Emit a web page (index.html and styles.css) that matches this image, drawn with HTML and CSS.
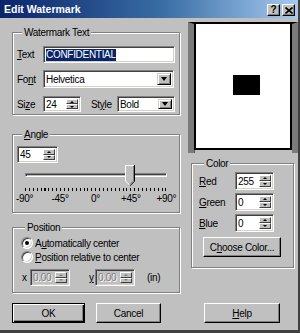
FILE: index.html
```html
<!DOCTYPE html>
<html>
<head>
<meta charset="utf-8">
<title>Edit Watermark</title>
<link rel="stylesheet" href="styles.css">
</head>
<body>
<div class="window">
  <div class="titlebar">
    <span class="title">Edit Watermark</span>
    <div class="caption-btns">
      <span class="cbtn help">?</span>
      <span class="cbtn close"><svg width="8" height="7" viewBox="0 0 8 7"><path d="M0.5 0.5 L7.5 6.5 M7.5 0.5 L0.5 6.5" stroke="#000" stroke-width="1.6" fill="none"/></svg></span>
    </div>
  </div>
  <div class="client">
    <div class="main">
      <div class="left">
        <fieldset class="group g-text">
          <legend>Watermark Text</legend>
          <div class="row r1">
            <span class="lbl"><u>T</u>ext</span>
            <div class="edit w-text"><span class="sel">CONFIDENTIAL</span></div>
          </div>
          <div class="row r2">
            <span class="lbl">Fo<u>n</u>t</span>
            <div class="edit combo w-font"><span class="combo-text">Helvetica</span><span class="dd"><i class="tri-down"></i></span></div>
          </div>
          <div class="row r3">
            <span class="lbl">Si<u>z</u>e</span>
            <div class="edit spin w-size"><span class="spin-text">24</span><span class="spin-btns"><span class="sb"><i class="tri-up-s"></i></span><span class="sb"><i class="tri-down-s"></i></span></span></div>
            <span class="lbl-style">St<u>y</u>le</span>
            <div class="edit combo w-style"><span class="combo-text">Bold</span><span class="dd"><i class="tri-down"></i></span></div>
          </div>
        </fieldset>

        <fieldset class="group g-angle">
          <legend><u>A</u>ngle</legend>
          <div class="edit spin w-angle"><span class="spin-text">45</span><span class="spin-btns"><span class="sb"><i class="tri-up-s"></i></span><span class="sb"><i class="tri-down-s"></i></span></span></div>
          <div class="slider">
            <div class="track"></div>
            <svg class="thumb" width="10" height="22" viewBox="0 0 10 22">
              <polygon points="0,0 10,0 10,16 5,21 0,16" fill="#c0c0c0"/>
              <polyline points="0.5,16 0.5,0.5 9,0.5" stroke="#fff" fill="none"/>
              <polyline points="0.5,16 5,20.5" stroke="#fff" fill="none"/>
              <polyline points="9.5,0 9.5,16.2 5,20.8" stroke="#000" fill="none"/>
              <polyline points="8.5,1 8.5,15.8 5,19.3" stroke="#808080" fill="none"/>
            </svg>
          </div>
          <div class="ticks"></div>
          <div class="scale"><span>-90°</span><span>-45°</span><span>0°</span><span>+45°</span><span>+90°</span></div>
        </fieldset>

        <fieldset class="group g-pos">
          <legend>Position</legend>
          <div class="radio-row"><span class="radio on"></span><span>A<u>u</u>tomatically center</span></div>
          <div class="radio-row"><span class="radio"></span><span><u>P</u>osition relative to center</span></div>
          <div class="xy-row">
            <span class="lbl-x">x</span>
            <div class="edit spin disabled w-xy"><span class="spin-text">0.00</span><span class="spin-btns"><span class="sb"><i class="tri-up-s"></i></span><span class="sb"><i class="tri-down-s"></i></span></span></div>
            <span class="lbl-y"><u>y</u></span>
            <div class="edit spin disabled w-xy"><span class="spin-text">0.00</span><span class="spin-btns"><span class="sb"><i class="tri-up-s"></i></span><span class="sb"><i class="tri-down-s"></i></span></span></div>
            <span class="lbl-in">(in)</span>
          </div>
        </fieldset>
      </div>

      <div class="right">
        <div class="preview"><div class="canvas"><div class="mark"></div></div></div>
        <fieldset class="group g-color">
          <legend>Color</legend>
          <div class="crow">
            <span class="clbl"><u>R</u>ed</span>
            <div class="edit spin w-col"><span class="spin-text">255</span><span class="spin-btns"><span class="sb"><i class="tri-up-s"></i></span><span class="sb"><i class="tri-down-s"></i></span></span></div>
          </div>
          <div class="crow">
            <span class="clbl"><u>G</u>reen</span>
            <div class="edit spin w-col"><span class="spin-text">0</span><span class="spin-btns"><span class="sb"><i class="tri-up-s"></i></span><span class="sb"><i class="tri-down-s"></i></span></span></div>
          </div>
          <div class="crow">
            <span class="clbl"><u>B</u>lue</span>
            <div class="edit spin w-col"><span class="spin-text">0</span><span class="spin-btns"><span class="sb"><i class="tri-up-s"></i></span><span class="sb"><i class="tri-down-s"></i></span></span></div>
          </div>
          <div class="btn choose">C<u>h</u>oose Color...</div>
        </fieldset>
      </div>
    </div>

    <div class="buttons">
      <div class="btn default ok">OK</div>
      <div class="btn cancel">Cancel</div>
      <div class="btn helpbtn"><u>H</u>elp</div>
    </div>
  </div>
</div>
</body>
</html>
```

FILE: styles.css
```css
* { box-sizing: border-box; }

body {
  margin: 0;
  font-family: "Liberation Sans", Arial, sans-serif;
  font-size: 10px;
  letter-spacing: -0.3px;
  color: #000;
  background: #c0c0c0;
}

u { text-decoration: underline; text-underline-offset: 1px; }

.window {
  width: 300px;
  height: 333px;
  background: #c0c0c0;
  border-right: 2px solid #404040;
  border-bottom: 3px solid #404040;
  display: flex;
  flex-direction: column;
  overflow: hidden;
}

/* title bar */
.titlebar {
  flex: none;
  height: 18px;
  background: linear-gradient(to right, #0a246a 0%, #3a6ea5 55%, #a6caf0 100%);
  display: flex;
  align-items: center;
  padding: 0 3px 0 4px;
}
.title {
  flex: 1;
  font-weight: bold;
  font-size: 10.5px;
  letter-spacing: 0;
  color: #fff;
  line-height: 12px;
}
.caption-btns { display: flex; gap: 2px; padding-top: 2px; }
.cbtn {
  width: 13px;
  height: 12px;
  background: #c0c0c0;
  border: 1px solid;
  border-color: #fff #000 #000 #fff;
  box-shadow: inset -1px -1px 0 #808080;
  display: flex;
  align-items: center;
  justify-content: center;
  font-weight: bold;
  font-size: 10px;
  letter-spacing: 0;
  line-height: 10px;
}

/* client */
.client {
  flex: 1;
  display: flex;
  flex-direction: column;
  padding: 4px 0 0 12px;
}
.main { display: flex; gap: 8px; }
.left { width: 168px; display: flex; flex-direction: column; padding-top: 5px; }
.right { width: 110px; display: flex; flex-direction: column; }

/* group boxes */
.group {
  margin: 0;
  padding: 0;
  border: 1px solid #808080;
  box-shadow: 1px 1px 0 #fff, inset 1px 1px 0 #fff;
  min-width: 0;
}
.group legend {
  margin-left: 5px;
  padding: 0 2px;
  height: 11px;
  line-height: 11px;
  background: #c0c0c0;
}

.g-text { height: 88px; padding: 8px 4px 0 4px; }
.g-angle { height: 84px; margin-top: 14px; padding: 6px 4px 0 4px; }
.g-pos { height: 71px; margin-top: 9px; padding: 3px 4px 0 7px; }

/* sunken edit */
.edit {
  height: 17px;
  background: #fff;
  border: 1px solid;
  border-color: #808080 #fff #fff #808080;
  box-shadow: inset 1px 1px 0 #404040, inset -1px -1px 0 #d4d0c8;
  display: flex;
  align-items: center;
  padding: 0 0 0 2px;
}
.sel { background: #0a246a; color: #fff; line-height: 12px; }

.row { display: flex; align-items: center; }
.r2 { margin-top: 7px; }
.r3 { margin-top: 8px; }
.lbl { width: 26px; }
.w-text { width: 132px; }
.w-font { width: 131px; height: 18px; }
.w-size { width: 38px; height: 16px; }
.lbl-style { width: 26px; margin-left: 10px; }
.w-style { width: 58px; height: 16px; }

/* combo */
.combo { padding-right: 2px; }
.combo-text { flex: 1; }
.dd {
  width: 14px;
  height: calc(100% - 4px);
  background: #c0c0c0;
  border: 1px solid;
  border-color: #d4d0c8 #000 #000 #d4d0c8;
  box-shadow: inset 1px 1px 0 #fff, inset -1px -1px 0 #808080;
  display: flex;
  align-items: center;
  justify-content: center;
}
.tri-down {
  width: 0; height: 0;
  border-left: 3.5px solid transparent;
  border-right: 3.5px solid transparent;
  border-top: 4px solid #000;
}

/* spin */
.spin { padding-right: 2px; }
.spin-text { flex: 1; }
.spin-btns {
  width: 12px;
  height: calc(100% - 4px);
  display: flex;
  flex-direction: column;
}
.sb {
  flex: 1;
  background: #c0c0c0;
  border: 1px solid;
  border-color: #fff #404040 #404040 #fff;
  display: flex;
  align-items: center;
  justify-content: center;
}
.tri-up-s {
  width: 0; height: 0;
  border-left: 2.5px solid transparent;
  border-right: 2.5px solid transparent;
  border-bottom: 2.5px solid #000;
}
.tri-down-s {
  width: 0; height: 0;
  border-left: 2.5px solid transparent;
  border-right: 2.5px solid transparent;
  border-top: 2.5px solid #000;
}
.disabled { background: #c0c0c0; }
.disabled .spin-text { color: #808080; text-shadow: 1px 1px 0 #fff; }
.disabled .tri-up-s { border-bottom-color: #808080; }
.disabled .tri-down-s { border-top-color: #808080; }

/* angle */
.w-angle { width: 41px; height: 17px; }
.slider { position: relative; height: 23px; margin-top: 2px; }
.track {
  position: absolute;
  left: 8px;
  top: 8px;
  width: 142px;
  height: 4px;
  border: 1px solid;
  border-color: #808080 #fff #fff #808080;
  background: #c0c0c0;
  box-shadow: inset 1px 1px 0 #404040;
}
.thumb { position: absolute; left: 108px; top: 0; }
.ticks {
  margin-left: 8px;
  width: 142px;
  height: 3px;
  background: repeating-linear-gradient(to right, #000 0 1px, transparent 1px 3.9px);
}
.scale {
  display: flex;
  justify-content: space-between;
  margin-left: -10px;
  width: 177px;
  margin-top: 2px;
  line-height: 11px;
}
.scale span { width: 36px; text-align: center; }

/* position */
.radio-row { display: flex; align-items: center; height: 14px; }
.radio {
  width: 12px;
  height: 12px;
  margin-left: 1px;
  margin-right: 2px;
  border-radius: 50%;
  border: 1px solid;
  border-color: #808080 #fff #fff #808080;
  box-shadow: inset 1px 1px 0 #404040, inset -1px -1px 0 #d4d0c8;
  background: #fff;
  display: flex;
  align-items: center;
  justify-content: center;
}
.radio.on::after {
  content: "";
  width: 4px;
  height: 4px;
  border-radius: 50%;
  background: #000;
}
.xy-row { display: flex; align-items: center; margin-top: 5px; }
.lbl-x { width: 8px; margin-left: 2px; }
.w-xy { width: 40px; height: 17px; }
.lbl-y { width: 6px; margin-left: 19px; }
.lbl-in { margin-left: 12px; }

/* preview */
.preview {
  height: 131px;
  background: #c0c0c0;
  border-top: 2px solid #000;
  border-left: 6px solid #7b7b7b;
  border-right: 6px solid #7b7b7b;
  box-shadow: inset 1px 0 0 #555;
}
.canvas {
  height: 126px;
  background: #fff;
  border-left: 2px solid #000;
  border-right: 2px solid #000;
  border-bottom: 2px solid #000;
  display: flex;
  align-items: center;
  justify-content: center;
}
.mark { width: 27px; height: 20px; background: #000; margin-left: 6px; margin-top: -2px; }

/* color */
.g-color { height: 110px; margin: 5px 4px 0 3px; padding: 3px 4px 0 7px; }
.crow { display: flex; align-items: center; height: 18px; }
.crow + .crow { margin-top: 3px; }
.clbl { width: 36px; }
.w-col { width: 39px; height: 18px; }

/* buttons */
.btn {
  height: 20px;
  background: #c0c0c0;
  border: 1px solid;
  border-color: #fff #000 #000 #fff;
  box-shadow: inset -1px -1px 0 #808080;
  display: flex;
  align-items: center;
  justify-content: center;
}
.btn.default {
  border-color: #000;
  box-shadow: inset 1px 1px 0 #fff, inset -1px -1px 0 #000, inset -2px -2px 0 #808080;
}
.choose { width: 78px; height: 20px; margin-top: 5px; margin-left: 4px; }
.buttons { display: flex; margin-top: 10px; }
.ok { width: 73px; }
.cancel { width: 65px; margin-left: 11px; }
.helpbtn { width: 76px; margin-left: 43px; }
```
